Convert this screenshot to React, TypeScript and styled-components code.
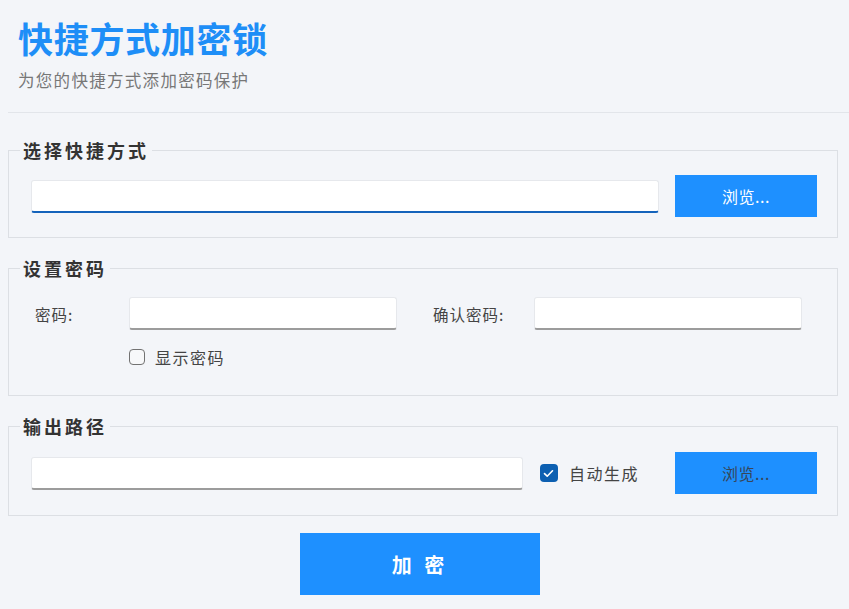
import React, { useState } from 'react';
import styled, { createGlobalStyle } from 'styled-components';

const GlobalStyle = createGlobalStyle`
  html, body {
    margin: 0;
    padding: 0;
    background: #f3f5f9;
  }
  body {
    font-family: "Noto Sans CJK SC", "Noto Sans", sans-serif;
    color: #333;
  }
`;

const Page = styled.div`
  padding: 0 11px 0 8px;
  min-height: 609px;
  box-sizing: border-box;
`;

const Header = styled.div`
  padding: 16px 0 0 10px;
`;

const Title = styled.h1`
  margin: 0;
  font-size: 35px;
  line-height: 44px;
  font-weight: 700;
  letter-spacing: 0.7px;
  color: #1e8ef7;
`;

const Subtitle = styled.div`
  margin-top: 9px;
  font-size: 16.5px;
  line-height: 22px;
  letter-spacing: 1.3px;
  color: #777;
`;

const Divider = styled.div`
  height: 1px;
  background: #e2e5ea;
  margin: 21px -11px 0 0;
`;

const Group = styled.fieldset<{ $top: number }>`
  margin: ${p => p.$top}px 0 0 0;
  padding: 0;
  border: 1px solid #dcdfe4;
  min-width: 0;
`;

const GroupBody = styled.div<{ $pad: string }>`
  padding: ${p => p.$pad};
`;

const Legend = styled.legend`
  margin-left: 11px;
  padding: 0 3px;
  font-size: 18px;
  line-height: 20px;
  font-weight: 700;
  letter-spacing: 3px;
  color: #333;
`;

const Row = styled.div`
  display: flex;
  align-items: center;
`;

const TextField = styled.input<{ $focused?: boolean }>`
  flex: 1;
  min-width: 0;
  height: 33px;
  box-sizing: border-box;
  background: #fff;
  border: 1px solid #e6e8ec;
  border-bottom: 2px solid ${p => (p.$focused ? '#1463bb' : '#9c9c9c')};
  border-radius: 3px;
  outline: none;
  padding: 0 8px;
  font-family: inherit;
  font-size: 15px;
`;

const BrowseButton = styled.button<{ $dim?: boolean }>`
  width: 142px;
  height: 42px;
  flex: none;
  border: none;
  background: #1e90ff;
  color: ${p => (p.$dim ? '#37465a' : '#fff')};
  font-family: inherit;
  font-size: 16px;
  letter-spacing: 0.5px;
  cursor: pointer;
`;

const PasswordGrid = styled.div`
  display: grid;
  grid-template-columns: 94px 268px 137px 268px;
  grid-template-rows: 33px 20px;
  row-gap: 17px;
  align-items: center;
`;

const FieldLabel = styled.label<{ $indent?: number }>`
  padding-left: ${p => p.$indent ?? 0}px;
  font-size: 15.5px;
  letter-spacing: 1px;
  color: #444;
`;

const CheckRow = styled.label`
  grid-column: 2 / 3;
  display: flex;
  align-items: center;
  gap: 10px;
  font-size: 16px;
  letter-spacing: 1.5px;
  color: #444;
  cursor: pointer;
`;

const Box = styled.span<{ $checked: boolean; $size: number }>`
  width: ${p => p.$size}px;
  height: ${p => p.$size}px;
  box-sizing: border-box;
  border-radius: 4px;
  flex: none;
  display: flex;
  align-items: center;
  justify-content: center;
  background: ${p => (p.$checked ? '#0c5fb1' : '#f7f8fa')};
  border: ${p => (p.$checked ? 'none' : '1.5px solid #727272')};
`;

const AutoCheck = styled(CheckRow)`
  margin: 0 36px 0 17px;
  gap: 11px;
`;

const Footer = styled.div`
  display: flex;
  justify-content: center;
  padding: 17px 6px 0 0;
`;

const EncryptButton = styled.button`
  width: 240px;
  height: 62px;
  border: none;
  background: #1e90ff;
  color: #fff;
  font-family: inherit;
  font-size: 20px;
  font-weight: 700;
  letter-spacing: 4px;
  cursor: pointer;
`;

const Check = () => (
  <svg width="11" height="9" viewBox="0 0 11 9" fill="none">
    <path d="M1.5 4.6 L4.2 7.2 L9.5 1.8" stroke="#fff" strokeWidth="1.6" strokeLinecap="round" strokeLinejoin="round" />
  </svg>
);

const App = () => {
  const [showPwd, setShowPwd] = useState(false);
  const [auto, setAuto] = useState(true);

  return (
    <Page>
      <GlobalStyle />
      <Header>
        <Title>快捷方式加密锁</Title>
        <Subtitle>为您的快捷方式添加密码保护</Subtitle>
      </Header>
      <Divider />

      <Group $top={27}>
        <Legend>选择快捷方式</Legend>
        <GroupBody $pad="15px 20px 20px 22px">
          <Row>
            <TextField $focused style={{ marginRight: 16 }} />
            <BrowseButton>浏览...</BrowseButton>
          </Row>
        </GroupBody>
      </Group>

      <Group $top={20}>
        <Legend>设置密码</Legend>
        <GroupBody $pad="19px 20px 28px 26px">
          <PasswordGrid>
            <FieldLabel>密码:</FieldLabel>
            <TextField type={showPwd ? 'text' : 'password'} />
            <FieldLabel $indent={36}>确认密码:</FieldLabel>
            <TextField type={showPwd ? 'text' : 'password'} />
            <CheckRow onClick={() => setShowPwd(!showPwd)}>
              <Box $checked={showPwd} $size={16}>{showPwd && <Check />}</Box>
              显示密码
            </CheckRow>
          </PasswordGrid>
        </GroupBody>
      </Group>

      <Group $top={20}>
        <Legend>输出路径</Legend>
        <GroupBody $pad="16px 20px 21px 22px">
          <Row>
            <TextField />
            <AutoCheck onClick={() => setAuto(!auto)}>
              <Box $checked={auto} $size={18}>{auto && <Check />}</Box>
              自动生成
            </AutoCheck>
            <BrowseButton $dim>浏览...</BrowseButton>
          </Row>
        </GroupBody>
      </Group>

      <Footer>
        <EncryptButton>加 密</EncryptButton>
      </Footer>
    </Page>
  );
};

export default App;
